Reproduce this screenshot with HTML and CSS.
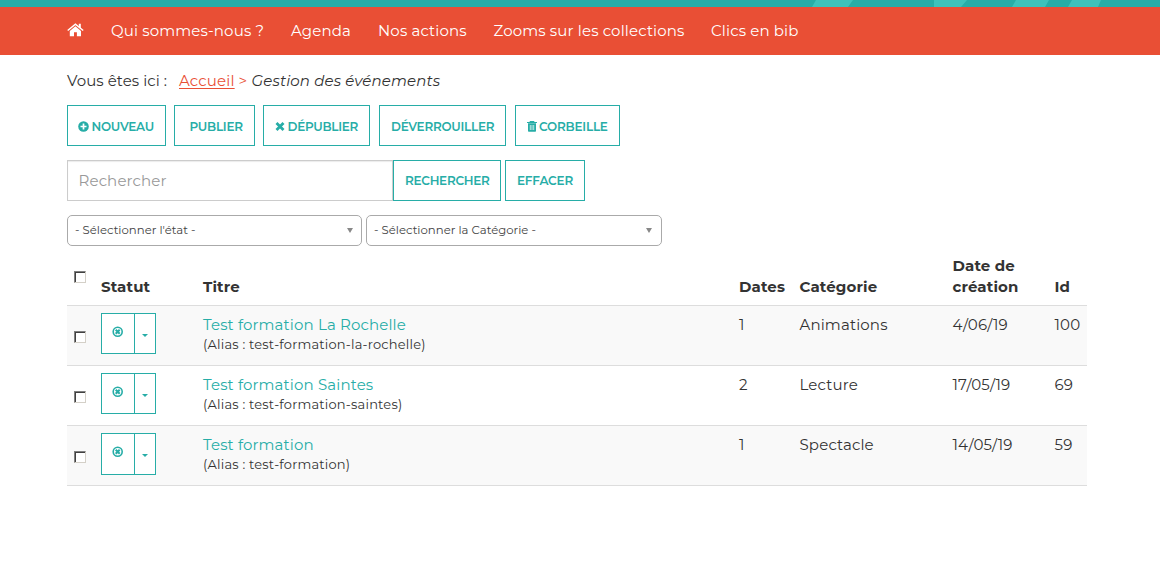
FILE: index.html
```html
<!DOCTYPE html>
<html lang="fr">
<head>
<meta charset="utf-8">
<title>Gestion des événements</title>
<link rel="stylesheet" href="styles.css">
</head>
<body>
<svg class="defs" aria-hidden="true">
  <symbol id="unpublished" viewBox="0 0 11 11">
    <circle cx="5.7" cy="5.7" r="4.5" fill="none" stroke="currentColor" stroke-width="1.6"/>
    <path d="M3.7 3.7 7.7 7.7M7.7 3.7 3.7 7.7" stroke="currentColor" stroke-width="2"/>
  </symbol>
</svg>
<header>
  <svg class="banner" viewBox="0 0 1160 7" aria-hidden="true">
    <path fill="#3dc2bb" d="M816 0H853L848 7H812zM934 0H967L961 7H934zM1016 0H1049L1045 7H1012zM1072 0H1101L1098 7H1068z"/>
  </svg>
  <nav class="nav">
    <a class="home" aria-label="Accueil"><svg width="17" height="14" viewBox="0 0 17 14"><path fill="#fff" d="M8.4 3.3 14 8v5.2H9.9V9.3H7v3.9H2.8V8z"/><path fill="none" stroke="#fff" stroke-width="1.5" d="M.7 7.5 8.4 1.2l7.8 6.3"/><path fill="#fff" d="M11.8.7h2v4.6l-2-1.6z"/></svg></a>
    <a>Qui sommes-nous ?</a>
    <a>Agenda</a>
    <a>Nos actions</a>
    <a>Zooms sur les collections</a>
    <a>Clics en bib</a>
  </nav>
</header>
<main>
  <div class="crumbs"><span class="here">Vous êtes ici :</span><a>Accueil</a><span class="sep">&gt;</span><em>Gestion des événements</em></div>
  <div class="toolbar">
    <button class="btn new"><svg width="11" height="11" viewBox="0 0 11 11"><circle cx="5.5" cy="5.5" r="5.3" fill="currentColor"/><path d="M5.5 2.5v6M2.5 5.5h6" stroke="#fff" stroke-width="1.7"/></svg><span>NOUVEAU</span></button>
    <button class="btn publish"><span>PUBLIER</span></button>
    <button class="btn unpublish"><svg width="10" height="9" viewBox="0 0 10 9"><path d="M1.5 1 8.5 8M8.5 1 1.5 8" stroke="currentColor" stroke-width="2.8"/></svg><span>DÉPUBLIER</span></button>
    <button class="btn unlock"><span>DÉVERROUILLER</span></button>
    <button class="btn trash"><svg width="10" height="11" viewBox="0 0 10 11"><path d="M0 1.5h10M3.3 1.3V.6h3.4v.7" fill="none" stroke="currentColor" stroke-width="1.2"/><path d="M1 2.2h8V10q0 .8-.8.8H1.8Q1 10.8 1 10z" fill="currentColor"/><path d="M3.3 4v5M5 4v5M6.7 4v5" stroke="#fff" stroke-width=".7"/></svg><span>CORBEILLE</span></button>
  </div>
  <div class="search">
    <input class="field" type="text" placeholder="Rechercher">
    <button class="btn find"><span>RECHERCHER</span></button>
    <button class="btn clear"><span>EFFACER</span></button>
  </div>
  <div class="filters">
    <div class="select state"><span>- Sélectionner l'état -</span><i></i></div>
    <div class="select category"><span>- Sélectionner la Catégorie -</span><i></i></div>
  </div>
  <table>
    <colgroup><col class="c-check"><col class="c-status"><col class="c-title"><col class="c-dates"><col class="c-cat"><col class="c-created"><col class="c-id"></colgroup>
    <thead><tr>
      <th class="check"><span class="box"></span></th>
      <th>Statut</th><th>Titre</th><th>Dates</th><th>Catégorie</th>
      <th>Date de<br>création</th><th>Id</th>
    </tr></thead>
    <tbody>
      <tr><td class="check"><span class="box"></span></td>
        <td><div class="status"><span class="state-icon"><svg width="11" height="11"><use href="#unpublished"/></svg></span><span class="drop"><i></i></span></div></td>
        <td><a>Test formation La Rochelle</a><small>(Alias : test-formation-la-rochelle)</small></td>
        <td>1</td><td>Animations</td><td>4/06/19</td><td>100</td></tr>
      <tr><td class="check"><span class="box"></span></td>
        <td><div class="status"><span class="state-icon"><svg width="11" height="11"><use href="#unpublished"/></svg></span><span class="drop"><i></i></span></div></td>
        <td><a>Test formation Saintes</a><small>(Alias : test-formation-saintes)</small></td>
        <td>2</td><td>Lecture</td><td>17/05/19</td><td>69</td></tr>
      <tr><td class="check"><span class="box"></span></td>
        <td><div class="status last"><span class="state-icon"><svg width="11" height="11"><use href="#unpublished"/></svg></span><span class="drop"><i></i></span></div></td>
        <td><a>Test formation</a><small>(Alias : test-formation)</small></td>
        <td>1</td><td>Spectacle</td><td>14/05/19</td><td>59</td></tr>
    </tbody>
  </table>
</main>
</body>
</html>
```
FILE: styles.css
```css
* { box-sizing: border-box; }
body {
  margin: 0;
  background: #fff;
  color: #333;
  font: 15px/20px Montserrat, Inter, sans-serif;
  letter-spacing: .14px;
}
.defs { display: none; }
svg { flex: none; }

/* Header */
.banner { display: block; width: 100%; height: 7px; background: #27ada7; }
.nav {
  display: grid;
  grid-template-columns: 44px 180px 87px 115.5px 217.5px auto;
  align-items: center;
  height: 48px;
  padding-left: 67px;
  background: #e94f35;
  color: #fff;
  white-space: nowrap;
}
.home { display: flex; padding-bottom: 2px; }

/* Breadcrumb */
main { padding: 16px 73px 0 67px; }
.crumbs { display: flex; height: 20px; white-space: nowrap; }
.crumbs .here { width: 112px; letter-spacing: .06px; }
.crumbs a { width: 56px; color: #e94f35; text-decoration: underline; text-underline-offset: 2px; }
.crumbs .sep { width: 16.5px; padding-left: 3.5px; color: #e94f35; }

/* Buttons */
.toolbar, .search, .filters { display: flex; }
.toolbar { margin-top: 14px; }
.btn {
  display: flex;
  align-items: center;
  height: 41px;
  padding: 2px 0 0 11px;
  border: 1px solid #27ada7;
  background: #fff;
  color: #27ada7;
  font: 600 12px/20px Montserrat, Inter, sans-serif;
  letter-spacing: -.26px;
  white-space: nowrap;
}
.new { width: 99px; margin-right: 8px; gap: 2.5px; padding-left: 10px; }
.publish { width: 81px; margin-right: 8px; padding-left: 14.5px; }
.unpublish { width: 107px; margin-right: 9px; gap: 2.5px; }
.unlock { width: 127px; margin-right: 9px; }
.trash { width: 105px; gap: 2px; letter-spacing: -.2px; }

/* Search */
.search { margin-top: 14px; }
.field {
  width: 326px;
  height: 41px;
  padding: 0 10.5px;
  border: 1px solid #ccc;
  box-shadow: inset 0 1px 1px rgba(0, 0, 0, .08);
  font: 15px Montserrat, Inter, sans-serif;
  letter-spacing: .13px;
}
.field::placeholder { color: #999; opacity: 1; }
.find { width: 108px; margin-right: 4px; }
.clear { width: 80px; letter-spacing: -.18px; }
.search .btn { padding-top: 0; }

/* Filters */
.filters { gap: 4px; margin-top: 14px; }
.select {
  display: flex;
  align-items: center;
  justify-content: space-between;
  height: 31px;
  padding: 0 8px 1px 7px;
  border: 1px solid #aaa;
  border-radius: 5px;
  color: #444;
  font-size: 11.7px;
  letter-spacing: 0;
}
.select i { margin-top: 1px; border: solid transparent; border-width: 5px 3.5px 0; border-top-color: #888; }
.state { width: 295px; }
.category { width: 296px; padding-right: 9px; }

/* Event list */
table { width: 1020px; margin-top: 6px; border-collapse: separate; border-spacing: 0; table-layout: fixed; }
.c-check { width: 27px; }
.c-status { width: 102px; }
.c-title { width: 536px; }
.c-dates { width: 60.5px; }
.c-cat { width: 153px; }
.c-created { width: 102px; }
.c-id { width: 39.5px; }
th, td { padding: 0 0 0 7px; text-align: left; white-space: nowrap; }
th { height: 53px; padding-bottom: 8px; vertical-align: bottom; line-height: 21px; }
td { height: 60px; padding-top: 9px; border-top: 1px solid #ddd; vertical-align: top; }
tbody tr:nth-child(odd) { background: #f9f9f9; }
tbody tr:last-child td { height: 61px; border-bottom: 1px solid #ddd; }
td a { display: block; color: #27ada7; }
td small { display: block; font-size: 13px; line-height: 18px; letter-spacing: .2px; }
.box {
  display: block;
  width: 12px;
  height: 12px;
  border: 1px solid;
  border-color: #808080 #d4d0c8 #d4d0c8 #808080;
  background: #fff;
  box-shadow: inset 1px 1px #404040;
}
th.check { padding-bottom: 22px; }
td.check { padding-top: 25px; }
.status { display: flex; width: 55px; height: 41px; margin-top: -2px; border: 1px solid #27ada7; background: #fff; color: #27ada7; }
.status.last { height: 42px; }
.state-icon { flex: none; width: 32px; padding: 12px 0 0 10px; line-height: 0; }
.drop { flex: 1; padding: 20px 0 0 7px; border-left: 1px solid #27ada7; }
.drop i { display: block; width: 6px; height: 3px; border: solid transparent; border-width: 3px 3px 0; border-top-color: #27ada7; }
```
